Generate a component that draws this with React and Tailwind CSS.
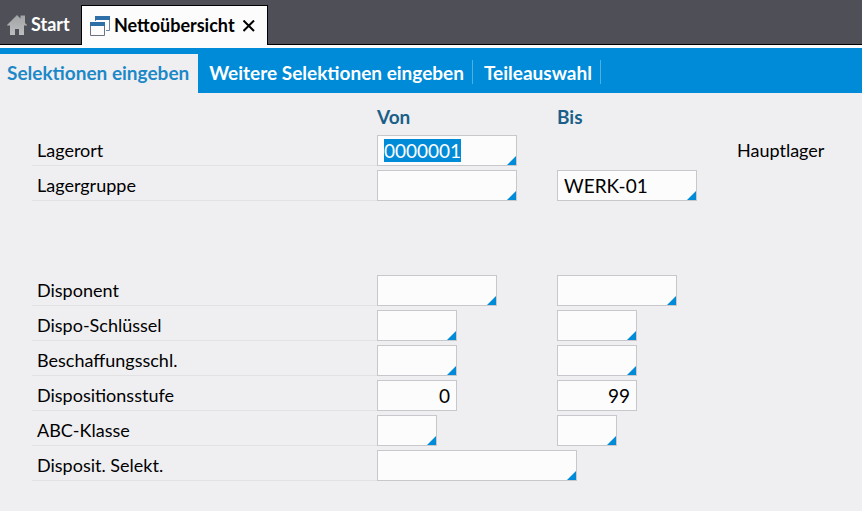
import { useEffect, useRef } from "react";

const TABS = ["Selektionen eingeben", "Weitere Selektionen eingeben", "Teileauswahl"];

const STORAGE_ROWS = [
  {
    id: "lagerort",
    label: "Lagerort",
    von: { width: "w-[140px]", value: "0000001", lookup: true, selected: true },
    text: "Hauptlager",
  },
  {
    id: "lagergruppe",
    label: "Lagergruppe",
    von: { width: "w-[140px]", lookup: true },
    bis: { width: "w-[140px]", value: "WERK-01", lookup: true },
  },
];

const PLANNING_ROWS = [
  {
    id: "disponent",
    label: "Disponent",
    von: { width: "w-[120px]", lookup: true },
    bis: { width: "w-[120px]", lookup: true },
  },
  {
    id: "dispo-schluessel",
    label: "Dispo-Schlüssel",
    von: { width: "w-20", lookup: true },
    bis: { width: "w-20", lookup: true },
  },
  {
    id: "beschaffung",
    label: "Beschaffungsschl.",
    von: { width: "w-20", lookup: true },
    bis: { width: "w-20", lookup: true },
  },
  {
    id: "stufe",
    label: "Dispositionsstufe",
    von: { width: "w-20", value: "0", numeric: true },
    bis: { width: "w-20", value: "99", numeric: true },
  },
  {
    id: "abc",
    label: "ABC-Klasse",
    von: { width: "w-[60px]", lookup: true },
    bis: { width: "w-[60px]", lookup: true },
  },
  {
    id: "selekt",
    label: "Disposit. Selekt.",
    von: { width: "w-[200px]", lookup: true },
  },
];

function HomeIcon() {
  return (
    <svg className="w-5 h-5 shrink-0" viewBox="0 0 20 20" aria-hidden="true">
      <defs>
        <linearGradient id="home-fill" x1="0" y1="0" x2="0" y2="1">
          <stop offset="0" stopColor="#a2a3a5" />
          <stop offset="1" stopColor="#bcbdbf" />
        </linearGradient>
      </defs>
      <path
        d="M10 0 L13.500 3.500 V.5 H18 V8 L20 10 V10.500 H17 V20 H12 V14 H8 V20 H3 V10.500 H0 V10 Z"
        fill="url(#home-fill)"
      />
    </svg>
  );
}

function WindowsIcon() {
  return (
    <svg className="w-5 h-5 shrink-0" viewBox="0 0 20 20" aria-hidden="true">
      <path d="M5.500 .5 H19.500 V14.500 H5.500 Z" fill="#fcfcfd" stroke="#6f84a0" />
      <path d="M5 0 H20 V4 H5 Z" fill="#2f6fa8" />
      <path d="M0 5 H16 V20 H0 Z" fill="#fcfcfd" />
      <path d="M.5 6.500 H14.500 V19.500 H.5 Z" fill="#fcfcfd" stroke="#6b7280" />
      <path d="M0 6 H15 V10 H0 Z" fill="#2f6fa8" />
    </svg>
  );
}

function CloseIcon() {
  return (
    <svg className="w-3 h-3" viewBox="0 0 12 12" stroke="#000" strokeWidth="2" aria-hidden="true">
      <path d="M.5 .5 L11 11 M11 .5 L.5 11" />
    </svg>
  );
}

function Field({ id, label, field }) {
  const ref = useRef(null);

  useEffect(() => {
    if (field.selected) {
      ref.current.focus();
      ref.current.select();
    }
  }, [field.selected]);

  return (
    <div className={`relative ${field.width}`}>
      <input
        ref={ref}
        id={id}
        type="text"
        aria-label={label}
        defaultValue={field.value}
        className={`block w-full h-[31px] px-1.5 border border-[#c8c8cc] bg-[#fcfcfd] text-[19px] leading-[23px] outline-none selection:bg-[#008bd8] selection:text-white ${
          field.numeric ? "text-right" : ""
        }`}
      />
      {field.lookup && (
        <svg
          className="absolute right-px bottom-px w-[9px] h-[9px] pointer-events-none"
          viewBox="0 0 9 9"
          fill="#008bd8"
          aria-hidden="true"
        >
          <path d="M9 0 V9 H0 Z" />
        </svg>
      )}
    </div>
  );
}

function Row({ row }) {
  return (
    <div className="grid grid-cols-[345px_180px_180px_1fr] items-center">
      <label
        htmlFor={`${row.id}-von`}
        className="h-[31px] pl-[5px] border-b border-[#e2e2e5] leading-[31px]"
      >
        {row.label}
      </label>
      <Field id={`${row.id}-von`} label={`${row.label} von`} field={row.von} />
      {row.bis ? (
        <Field id={`${row.id}-bis`} label={`${row.label} bis`} field={row.bis} />
      ) : (
        <span />
      )}
      {row.text && <span>{row.text}</span>}
    </div>
  );
}

export default function App() {
  return (
    <div className="min-h-screen bg-[#efeff2] font-[Lato,sans-serif] text-[18px] text-black">
      <header className="flex h-[45px] pt-[5px] bg-[#4e4f57] border-b border-black">
        <button type="button" className="flex items-center gap-1 w-[81px] pl-[7px] font-bold text-white">
          <HomeIcon />
          Start
        </button>
        <div className="flex items-center gap-1 -mb-px px-2 bg-[#fcfcfd] border border-b-0 border-black">
          <WindowsIcon />
          <span className="font-bold">Nettoübersicht</span>
          <button type="button" aria-label="Schließen" className="p-1">
            <CloseIcon />
          </button>
        </div>
      </header>

      <nav className="border-t-3 border-[#fcfcfd] bg-[#008bd8]">
        <div className="flex pt-1.5 text-[19px] font-bold">
          {TABS.map((tab, i) =>
            i === 0 ? (
              <button
                key={tab}
                type="button"
                className="h-[39px] pl-[7px] pr-[9px] bg-[#efeff2] text-[#1d88c7]"
              >
                {tab}
              </button>
            ) : (
              <button key={tab} type="button" className="h-[39px] pb-1 pl-[11px] text-white">
                <span className="block h-6 pr-2 leading-[26px] border-r border-[#4db1e6]">{tab}</span>
              </button>
            )
          )}
        </div>
      </nav>

      <main className="pl-8 pt-2">
        <div className="grid grid-cols-[345px_180px_180px_1fr] h-[34px] leading-[31px] text-[19px] font-bold text-[#1b5f88]">
          <span className="col-start-2">Von</span>
          <span>Bis</span>
        </div>
        <div className="flex flex-col gap-1">
          {STORAGE_ROWS.map((row) => (
            <Row key={row.id} row={row} />
          ))}
        </div>
        <div className="flex flex-col gap-1 mt-[74px]">
          {PLANNING_ROWS.map((row) => (
            <Row key={row.id} row={row} />
          ))}
        </div>
      </main>
    </div>
  );
}
